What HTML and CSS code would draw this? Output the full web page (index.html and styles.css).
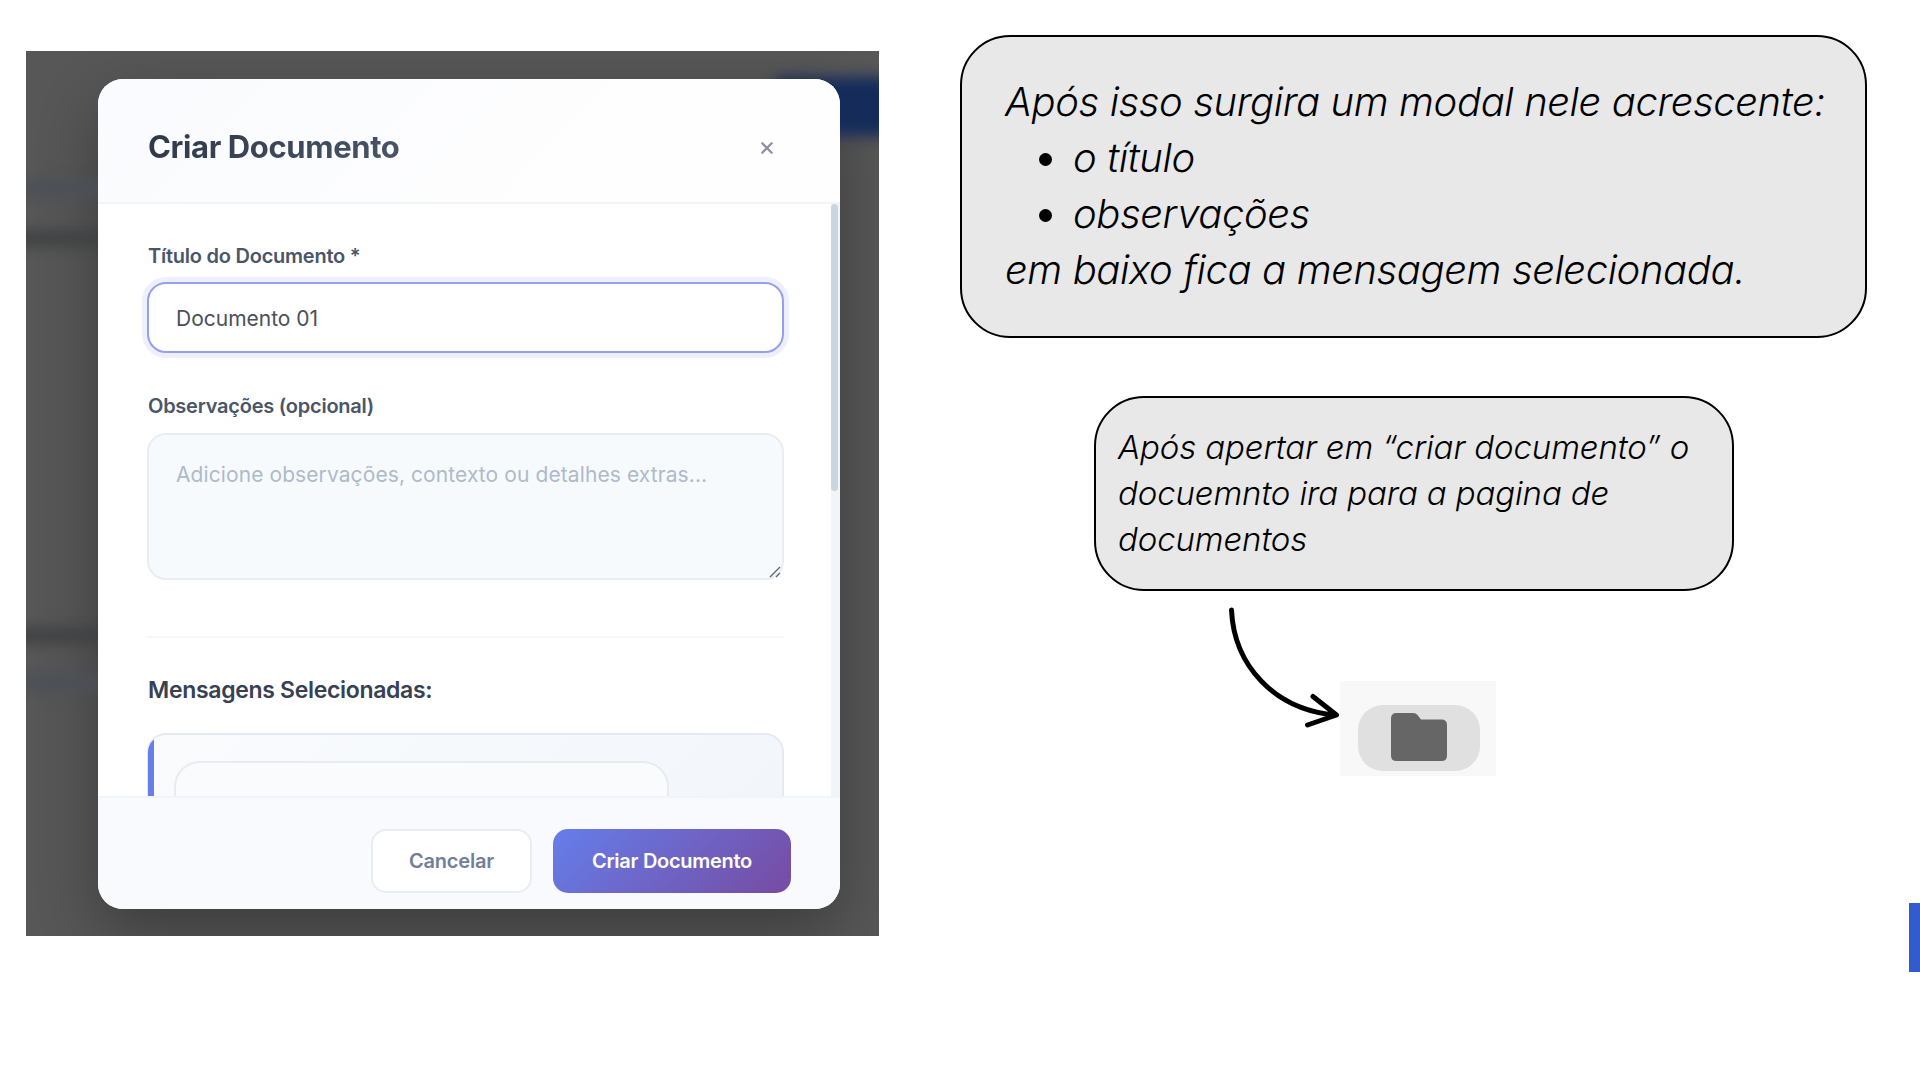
FILE: index.html
```html
<!DOCTYPE html>
<html lang="pt-BR">
<head>
<meta charset="utf-8">
<title>Criar Documento</title>
<link rel="stylesheet" href="styles.css">
</head>
<body>
<main class="slide">
  <section class="backdrop">
    <span class="ghost ghost-button"></span>
    <span class="ghost ghost-line ghost-a"></span>
    <span class="ghost ghost-text ghost-b"></span>
    <span class="ghost ghost-text ghost-c"></span>
    <span class="ghost ghost-line ghost-d"></span>
    <div class="modal">
      <header class="modal-header">
        <h1 class="modal-title">Criar Documento</h1>
        <svg class="close" viewBox="0 0 12 12"><path d="M1.3 1.3 10.7 10.7M10.7 1.3 1.3 10.7"/></svg>
      </header>
      <div class="modal-body">
        <div class="form">
          <label class="label">Título do Documento *</label>
          <div class="field field-focus">Documento 01</div>
          <label class="label label-second">Observações (opcional)</label>
          <div class="field area">Adicione observações, contexto ou detalhes extras...
            <svg class="grip" viewBox="0 0 12 12"><path d="M1 11 11 1M7 11l4-4"/></svg>
          </div>
          <hr class="rule">
          <h2 class="subtitle">Mensagens Selecionadas:</h2>
          <div class="messages"><div class="bubble"></div></div>
        </div>
        <div class="track"><div class="thumb"></div></div>
      </div>
      <footer class="modal-footer">
        <div class="btn btn-cancel">Cancelar</div>
        <div class="btn btn-create">Criar Documento</div>
      </footer>
    </div>
  </section>
  <section class="notes">
    <div class="note note-main">
      <p>Após isso surgira um modal nele acrescente:</p>
      <ul>
        <li>o título</li>
        <li>observações</li>
      </ul>
      <p>em baixo fica a mensagem selecionada.</p>
    </div>
    <div class="note note-next">
      <p>Após apertar em “criar documento” o<br>docuemnto ira para a pagina de<br>documentos</p>
    </div>
    <div class="pointer">
      <svg class="arrow" viewBox="0 0 120 130"><path d="M9.5 10C12 65 52 110 114 115M91 96.500L114.500 115 85.500 125"/></svg>
      <div class="tile"><div class="pill">
        <svg class="folder" viewBox="0 0 56 48"><path d="M5.500 0H22Q25 0 26.500 2L30 6.500H50.500Q56 6.500 56 12V42.500Q56 48 50.500 48H5.500Q0 48 0 42.500V5.500Q0 0 5.500 0Z"/></svg>
      </div></div>
    </div>
  </section>
  <span class="edge"></span>
</main>
</body>
</html>
```
FILE: styles.css
```css
* { box-sizing: border-box; margin: 0; padding: 0; }
body { background: #fff; font-family: Inter, "Liberation Sans", sans-serif; }
.slide { position: relative; width: 1920px; height: 1080px; overflow: hidden; display: flex; align-items: flex-start; padding: 35px 52px 0 26px; }
.backdrop { position: relative; flex: none; width: 853px; height: 885px; margin-top: 16px; padding: 28px 0 0 72px; background: #575757; overflow: hidden; }
.ghost { position: absolute; filter: blur(7px); }
.ghost-button { left: 747px; top: 26px; width: 150px; height: 59px; background: #152c5b; border-radius: 10px; }
.ghost-line { left: -20px; width: 120px; height: 17px; background: #4d4f58; }
.ghost-text { left: -20px; width: 120px; height: 15px; background: #3f4041; }
.ghost-a { top: 129px; }
.ghost-b { top: 180px; }
.ghost-c { top: 577px; }
.ghost-d { top: 624px; }
.modal { position: relative; display: flex; flex-direction: column; width: 742px; height: 830px; border-radius: 25px; overflow: hidden; background: #fff; }
.backdrop::before { content: ""; position: absolute; left: 72px; top: 28px; width: 742px; height: 830px; border-radius: 25px; box-shadow: 0 24px 60px rgba(0, 0, 0, .3); }
.modal-header { display: flex; flex: none; justify-content: space-between; align-items: center; height: 125px; padding: 12px 67px 0 50px; border-bottom: 2px solid #f1f5f9; background: linear-gradient(135deg, #fafbfe, #fefefe 70%); }
.modal-title { font-size: 31px; line-height: 36px; font-weight: 700; letter-spacing: -.38px; color: transparent; background: linear-gradient(135deg, #2d3748, #4a5568); background-clip: text; }
.close { width: 12px; height: 12px; margin-top: 3px; fill: none; stroke: #8b93a1; stroke-width: 2.3; stroke-linecap: round; }
.modal-body { display: flex; flex: none; height: 592px; overflow: hidden; }
.form { flex: none; width: 727px; padding: 39px 0 0 49px; }
.label { display: block; height: 39px; padding-left: 1px; font-size: 20px; line-height: 26px; font-weight: 600; letter-spacing: -.24px; color: #4a5568; }
.label-second { margin-top: 40px; height: 40px; }
.field { width: 637px; border: 2px solid #e8edf3; border-radius: 19px; padding: 0 27px; font-size: 21px; white-space: nowrap; }
.field-focus { height: 71px; line-height: 70px; color: #4a5058; border-color: #959feb; background: #fff; box-shadow: 0 0 0 5px #eef1fd; }
.area { position: relative; height: 147px; padding-top: 25px; line-height: 30px; letter-spacing: .09px; color: #afbac9; background: #f6fafd; }
.grip { position: absolute; right: 1px; bottom: 0; width: 12px; height: 12px; fill: none; stroke: #606468; stroke-width: 1.3; }
.rule { width: 637px; border: 0; height: 2px; margin: 56px 0 35px; background: #f5f7f9; }
.subtitle { height: 60px; padding-left: 1px; font-size: 23px; line-height: 34px; font-weight: 600; letter-spacing: -.32px; color: #364152; }
.messages { position: relative; width: 637px; height: 200px; padding: 26px 0 0 26px; border: 2px solid #e5e9f2; border-left-width: 1px; border-radius: 19px; overflow: hidden; background: linear-gradient(135deg, #f9fbfd, #f1f5fa); }
.messages::before { content: ""; position: absolute; left: 0; top: 0; width: 6px; height: 100%; background: #667eea; }
.bubble { width: 495px; height: 120px; border: 2px solid #e8ebf0; border-radius: 26px; background: #f9fbfd; }
.track { width: 15px; padding: 0 2px 0 6px; height: 592px; background: linear-gradient(90deg, transparent 6px, #f1f5f9 6px); }
.thumb { height: 287px; border-radius: 4px; background: #cbd5df; }
.modal-footer { display: flex; flex: none; height: 113px; justify-content: flex-end; align-items: flex-start; gap: 21px; padding: 31px 49px 0; border-top: 2px solid #f1f5f9; background: #f9fafd; }
.btn { height: 64px; border-radius: 15px; font-size: 20px; line-height: 65px; font-weight: 600; text-align: center; white-space: nowrap; }
.btn-cancel { width: 161px; line-height: 61px; letter-spacing: -.18px; color: #718096; border: 2px solid #e8edf2; background: #fff; }
.btn-create { width: 238px; letter-spacing: -.28px; color: #fff; background: linear-gradient(135deg, #667eea, #764ba2); }
.notes { flex: none; width: 907px; margin-left: 81px; }
.note { border: 2px solid #000; border-radius: 50px; background: #e8e8e8; color: #000; font-style: italic; font-weight: 300; white-space: nowrap; }
.note-main { height: 303px; padding: 37px 0 0 43px; font-size: 40px; line-height: 56px; letter-spacing: -.4px; }
.note-main ul { padding-left: 68px; list-style: none; }
.note-main li { position: relative; }
.note-main li::before { content: ""; position: absolute; left: -34px; top: 23px; width: 13px; height: 13px; border-radius: 50%; background: #000; }
.note-next { width: 640px; height: 195px; margin: 58px 0 0 134px; padding: 26px 0 0 22px; font-size: 33px; line-height: 46px; letter-spacing: -.13px; }
.pointer { display: flex; align-items: flex-start; margin: 9px 0 0 262px; }
.arrow { flex: none; width: 120px; height: 130px; margin-right: -2px; fill: none; stroke: #000; stroke-width: 5; stroke-linecap: round; stroke-linejoin: round; }
.tile { display: flex; width: 156px; height: 95px; margin-top: 81px; padding: 24px 0 0 18px; background: #f8f8f8; }
.pill { width: 122px; height: 66px; padding: 8px 0 0 33px; border-radius: 25px; background: #e0e0e0; }
.folder { display: block; width: 56px; height: 48px; fill: #666; }
.edge { position: absolute; right: 0; top: 903px; width: 11px; height: 69px; background: #335bd0; }
```
